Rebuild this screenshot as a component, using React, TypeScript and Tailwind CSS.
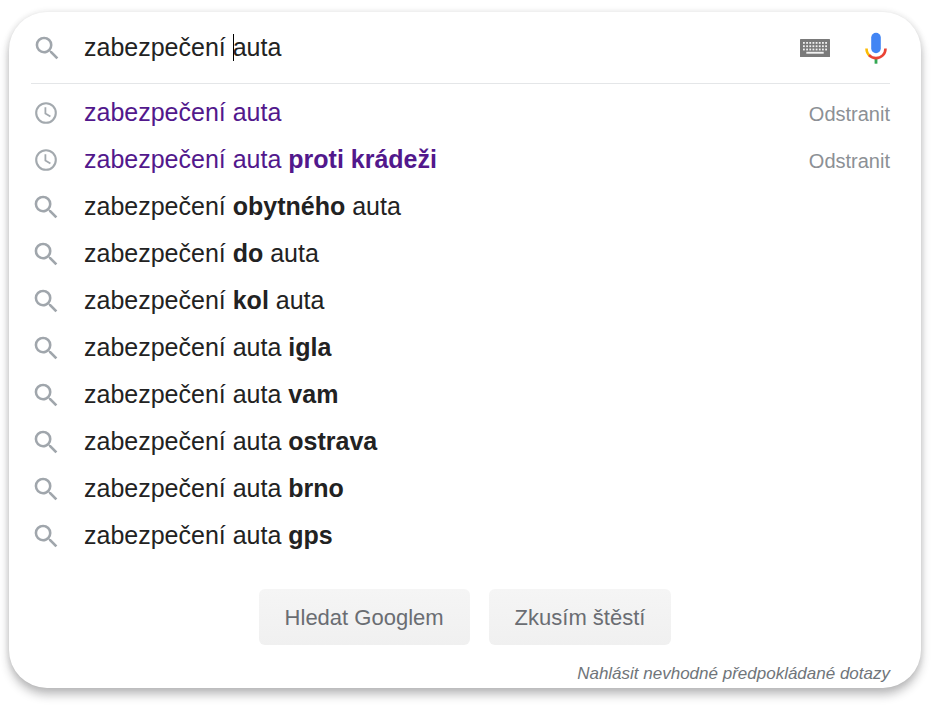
import type { ReactNode } from "react";

type Suggestion = { text: ReactNode; visited?: boolean };

const suggestions: Suggestion[] = [
  { text: "zabezpečení auta", visited: true },
  { text: <>zabezpečení auta <b>proti krádeži</b></>, visited: true },
  { text: <>zabezpečení <b>obytného</b> auta</> },
  { text: <>zabezpečení <b>do</b> auta</> },
  { text: <>zabezpečení <b>kol</b> auta</> },
  { text: <>zabezpečení auta <b>igla</b></> },
  { text: <>zabezpečení auta <b>vam</b></> },
  { text: <>zabezpečení auta <b>ostrava</b></> },
  { text: <>zabezpečení auta <b>brno</b></> },
  { text: <>zabezpečení auta <b>gps</b></> },
];

function SearchIcon() {
  return (
    <svg viewBox="2.500 2.500 18.500 18.500" className="size-6 shrink-0" fill="#a0a6ac" aria-hidden="true">
      <path d="M15.5 14h-.79l-.28-.27A6.471 6.471 0 0 0 16 9.5 6.5 6.5 0 1 0 9.5 16c1.61 0 3.09-.59 4.23-1.57l.27.28v.79l5 4.99L20.49 19l-4.99-5zm-6 0C7.01 14 5 11.99 5 9.5S7.01 5 9.5 5 14 7.01 14 9.5 11.99 14 9.5 14z" />
    </svg>
  );
}

function ClockIcon() {
  return (
    <svg viewBox="0 0 24 24" className="size-6 shrink-0" fill="none" stroke="#a3a9ae" aria-hidden="true">
      <circle cx="12" cy="12" r="9.8" strokeWidth="2.1" />
      <path d="M11.4 6.2v6.4l5 3" strokeWidth="1.8" />
    </svg>
  );
}

function KeyboardIcon() {
  return (
    <svg viewBox="0 0 30 18" className="h-[18px] w-[30px]" aria-hidden="true">
      <rect width="30" height="18" rx="0.6" fill="#7a7a7a" />
      {[3, 6.3, 9.6].map((y) =>
        [0, 1, 2, 3, 4, 5, 6, 7].map((i) => (
          <rect key={`${i}-${y}`} x={3 + i * 3.17} y={y} width="1.8" height="1.8" fill="#f1f1f1" />
        )),
      )}
      <rect x="6.300" y="12.800" width="17.400" height="1.900" fill="#f1f1f1" />
    </svg>
  );
}

function MicIcon() {
  return (
    <svg viewBox="0 0 24 32" className="h-8 w-6" fill="none" aria-hidden="true">
      <rect x="7.200" y="0.8" width="9.600" height="20.4" rx="4.8" fill="#4285f4" />
      <path d="M12 26.500v5.200" stroke="#34a853" strokeWidth="2.8" />
      <path d="M2.500 16.400c0 3.200 1.400 5.800 3.500 7.500" stroke="#fbbc05" strokeWidth="2.6" />
      <path d="M5 23.100C6.900 25 9.300 26.100 12 26.100c5.300 0 9.500-4.100 9.500-9.700" stroke="#ea4335" strokeWidth="2.6" />
    </svg>
  );
}

export default function App() {
  return (
    <main className="pt-3 pr-3 pb-[18px] pl-[9px] font-['Liberation_Sans',Arial,sans-serif]">
      <form
        role="search"
        onSubmit={(e) => e.preventDefault()}
        className="rounded-[38px] bg-white pb-0.5 text-[25px] text-[#222] shadow-[0_7px_10px_rgba(32,33,36,0.28),0_0_6px_rgba(32,33,36,0.12)]"
      >
        <div className="mr-[31px] ml-[22px] flex h-[72px] items-center border-b border-[#e4e6e8] pl-1">
          <SearchIcon />
          <div className="relative ml-[25px] grow">
            <input
              aria-label="Hledat"
              defaultValue="zabezpečení auta"
              className="block h-10 w-full bg-transparent outline-none"
            />
            <span className="absolute top-1.5 left-[149px] h-[27px] w-px bg-black" />
          </div>
          <button type="button" aria-label="Klávesnice" className="mr-[34px]">
            <KeyboardIcon />
          </button>
          <button type="button" aria-label="Hlasové vyhledávání" className="mr-0.5">
            <MicIcon />
          </button>
        </div>

        <ul className="mr-[31px] ml-[22px] pt-[5px]">
          {suggestions.map((s, i) => (
            <li key={i} className="flex h-[47px] items-center gap-[26px] pl-[3px]">
              {s.visited ? <ClockIcon /> : <SearchIcon />}
              <a href="#" className={s.visited ? "grow text-[#52188c]" : "grow"}>
                {s.text}
              </a>
              {s.visited && (
                <button type="button" className="pt-0.5 text-xl text-[#8c9095]">
                  Odstranit
                </button>
              )}
            </li>
          ))}
        </ul>

        <div className="mt-[30px] flex justify-center gap-[19px] text-[22px] text-[#6a6d72]">
          <button type="submit" className="h-14 rounded-md bg-linear-to-b from-[#f5f5f5] to-[#f0f0f0] px-[26px]">
            Hledat Googlem
          </button>
          <button type="button" className="h-14 rounded-md bg-linear-to-b from-[#f5f5f5] to-[#f0f0f0] px-[26px]">
            Zkusím štěstí
          </button>
        </div>

        <div className="mt-[17px] mr-[31px] flex justify-end">
          <a href="#" className="text-[17px] leading-6 text-[#70757a] italic">
            Nahlásit nevhodné předpokládané dotazy
          </a>
        </div>
      </form>
    </main>
  );
}
